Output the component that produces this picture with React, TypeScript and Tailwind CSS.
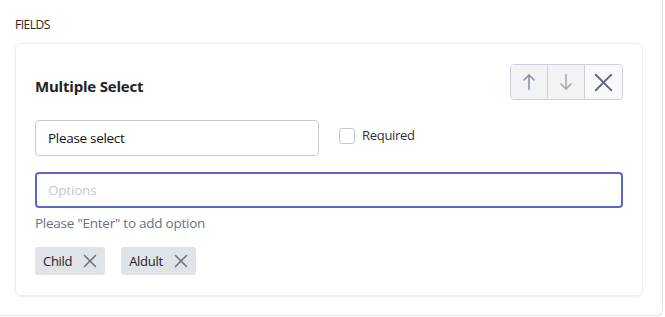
import { X } from 'lucide-react'

const Arrow = ({ down, color }: { down?: boolean; color: string }) => (
  <svg width="12" height="16" viewBox="0 0 12 16" fill="none" stroke={color} strokeWidth="1.6" strokeLinecap="round" strokeLinejoin="round" className={down ? 'rotate-180' : ''}>
    <path d="M6 15.2V1" />
    <path d="M1 6l5-5 5 5" />
  </svg>
)

const App = () => {
  const tags = ['Child', 'Aldult']

  return (
    <div className="w-[663px] h-[316px] bg-white border-r border-b border-[#e2e4e8] rounded-br-md px-[15px] pt-[16px] font-['Open_Sans',sans-serif]">
      <div className="text-[12px] leading-[15px] mt-[1px] text-[#2d2520] uppercase tracking-[-0.5px]">Fields</div>

      <div className="mt-[11px] w-[628px] h-[253px] border border-[#eceef0] rounded-md shadow-[0_1px_2px_rgba(0,0,0,0.08)] px-[19px] pt-[20px]">
        <div className="flex items-center justify-between">
          <h3 className="mt-[8px] text-[15px] font-bold text-[#222] tracking-[-0.2px]">Multiple Select</h3>
          <div className="flex h-[36px] border border-[#c9d1da] rounded-[4px] overflow-hidden">
            <button className="w-[37px] flex items-center justify-center bg-[#f1f3f5] border-r border-[#c9d1da]">
              <Arrow color="#8593a1" />
            </button>
            <button className="w-[37px] flex items-center justify-center bg-[#f1f3f5] border-r border-[#c9d1da]">
              <Arrow down color="#a0abb7" />
            </button>
            <button className="w-[37px] flex items-center justify-center bg-[#f8f9fa]">
              <X size={31} strokeWidth={1.4} className="text-[#5f6b78]" />
            </button>
          </div>
        </div>

        <div className="mt-[20px] flex items-start gap-[20px]">
          <div className="w-[284px] h-[36px] border border-[#c5ccd6] rounded-[4px] flex items-center px-[12px] text-[13.5px] text-[#111] tracking-[-0.3px]">
            Please select
          </div>
          <label className="mt-[6px] flex items-center gap-[7px] text-[13px] text-[#333] tracking-[-0.3px]">
            <span className="w-[16px] h-[16px] border border-[#c5ccd6] rounded-[3px] bg-white" />
            Required
          </label>
        </div>

        <div className="mt-[16px] h-[36px] border-2 border-[#5c68c6] rounded-[4px] flex items-center px-[11px] text-[13.5px] text-[#c3c8d0] tracking-[-0.2px]">
          Options
        </div>
        <p className="mt-[5px] text-[13.5px] text-[#6b7280] tracking-[-0.25px]">Please "Enter" to add option</p>

        <div className="mt-[14px] flex gap-[16px]">
          {tags.map((tag) => (
            <span key={tag} className="h-[28px] flex items-center gap-[7px] pl-[8px] pr-[4px] bg-[#e0e3e8] rounded-[3px] text-[13px] text-[#222] tracking-[-0.3px]">
              {tag}
              <X size={22} strokeWidth={1.7} className="text-[#6b7480]" />
            </span>
          ))}
        </div>
      </div>
    </div>
  )
}

export default App
